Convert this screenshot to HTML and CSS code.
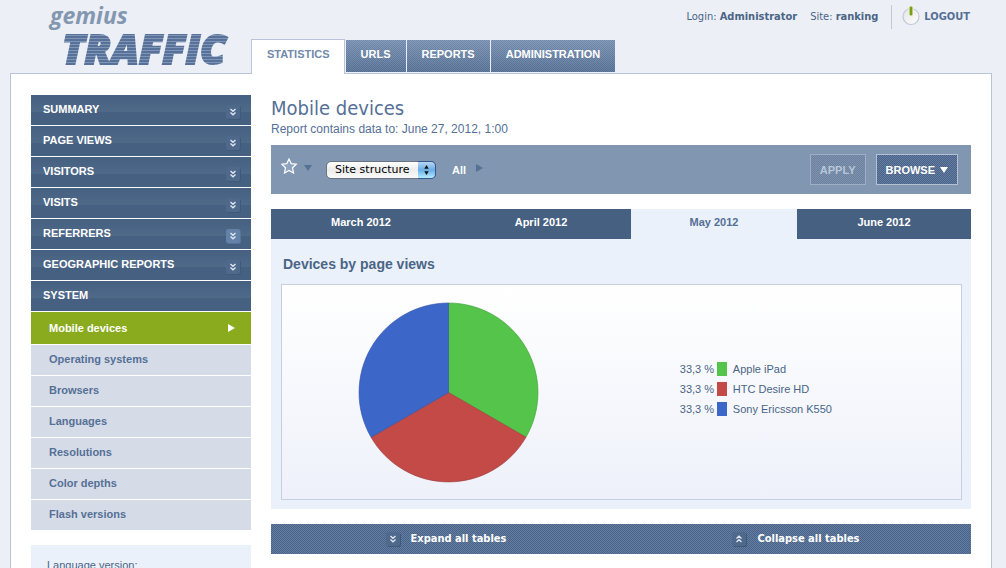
FILE: index.html
```html
<!DOCTYPE html>
<html lang="en">
<head>
<meta charset="utf-8">
<title>gemius TRAFFIC - Mobile devices</title>
<link rel="stylesheet" href="styles.css">
</head>
<body>
<svg class="symbols" aria-hidden="true">
  <symbol id="chevrons" viewBox="0 0 14 14"><path d="M4.5 4 L7 6.2 L9.500 4 M4.500 7.500 L7 9.700 L9.500 7.500" fill="none" stroke="#dfe7f2" stroke-width="1.4"/></symbol>
</svg>
<header class="header">
  <a class="logo" href="#"><span class="logo-top">gemius</span><span class="logo-main">TRAFFIC</span></a>
  <nav class="tabs">
    <a class="tab tab-active" href="#">STATISTICS</a>
    <a class="tab" href="#">URLS</a>
    <a class="tab" href="#">REPORTS</a>
    <a class="tab" href="#">ADMINISTRATION</a>
  </nav>
  <div class="account">
    <span>Login: <b>Administrator</b></span>
    <span>Site: <b>ranking</b></span>
    <a class="logout" href="#">
      <svg width="18" height="22" viewBox="0 0 18 22" aria-hidden="true">
        <defs><linearGradient id="knob" x1="0" y1="0" x2="1" y2="1"><stop offset="0" stop-color="#e4e4e4"/><stop offset="1" stop-color="#fff"/></linearGradient></defs>
        <circle cx="9" cy="10.500" r="8" fill="url(#knob)" stroke="#c0c8da" stroke-width="1.200"/>
        <rect x="6.500" y="0" width="5" height="10" fill="#eceff5"/>
        <rect x="7.500" y="0.500" width="3" height="9" rx="1" fill="#8cb010"/>
        <path d="M9 1V9" stroke="#6d8d0c"/>
      </svg>LOGOUT</a>
  </div>
</header>
<div class="page">
  <aside class="sidebar">
    <nav class="menu">
      <a class="menu-item" href="#">SUMMARY<svg class="toggle"><use href="#chevrons"/></svg></a>
      <a class="menu-item" href="#">PAGE VIEWS<svg class="toggle"><use href="#chevrons"/></svg></a>
      <a class="menu-item" href="#">VISITORS<svg class="toggle"><use href="#chevrons"/></svg></a>
      <a class="menu-item" href="#">VISITS<svg class="toggle"><use href="#chevrons"/></svg></a>
      <a class="menu-item" href="#">REFERRERS<svg class="toggle toggle-hot"><use href="#chevrons"/></svg></a>
      <a class="menu-item" href="#">GEOGRAPHIC REPORTS<svg class="toggle"><use href="#chevrons"/></svg></a>
      <a class="menu-item" href="#">SYSTEM</a>
      <a class="sub-item sub-active" href="#">Mobile devices<svg width="7" height="8" viewBox="0 0 7 8" aria-hidden="true"><path d="M0 0L7 4L0 8Z" fill="#fff"/></svg></a>
      <a class="sub-item" href="#">Operating systems</a>
      <a class="sub-item" href="#">Browsers</a>
      <a class="sub-item" href="#">Languages</a>
      <a class="sub-item" href="#">Resolutions</a>
      <a class="sub-item" href="#">Color depths</a>
      <a class="sub-item" href="#">Flash versions</a>
    </nav>
    <div class="language">Language version:</div>
  </aside>
  <main class="content">
    <h1 class="title">Mobile devices</h1>
    <p class="subtitle">Report contains data to: June 27, 2012, 1:00</p>
    <div class="toolbar">
      <button class="favourite" type="button" aria-label="Favourites">
        <svg width="32" height="16" viewBox="0 0 32 16" aria-hidden="true">
          <path d="M8 1L10.200 5.600L15.300 6.200L11.500 9.700L12.500 15L8 12.500L3.500 15L4.500 9.700L0.700 6.200L5.800 5.600Z" fill="#8da3c0" stroke="#fff" stroke-width="1.200"/>
          <path d="M23 7H31L27 13Z" fill="#557196"/>
        </svg>
      </button>
      <span class="structure">
        <select class="structure-select" aria-label="Filter"><option>Site structure</option></select>
        <svg class="structure-arrows" viewBox="0 0 18 18" aria-hidden="true"><path d="M9 3.500L11.500 7.500H6.500Z M9 14.500L6.500 10.500H11.500Z" fill="#111"/></svg>
      </span>
      <a class="all" href="#">All<svg width="7" height="12" viewBox="0 0 7 12" aria-hidden="true"><path d="M0 0L7 4L0 8Z" fill="#557196"/></svg></a>
      <button class="button button-off" type="button" disabled>APPLY</button>
      <button class="button" type="button">BROWSE<svg width="8" height="7" viewBox="0 0 8 7" aria-hidden="true"><path d="M0 0H8L4 6Z" fill="#fff"/></svg></button>
    </div>
    <section class="report">
      <nav class="months">
        <a class="month" href="#">March 2012</a>
        <a class="month" href="#">April 2012</a>
        <a class="month month-active" href="#">May 2012</a>
        <a class="month" href="#">June 2012</a>
      </nav>
      <h2 class="chart-title">Devices by page views</h2>
      <div class="chart">
        <svg class="pie" viewBox="-91 -91 182 182" role="img" aria-label="Devices by page views">
          <path d="M0 0V-90A90 90 0 0 1 77.900 45Z" fill="#54c44a" stroke="#3d9c36" stroke-width="0.600"/>
          <path d="M0 0L77.900 45A90 90 0 0 1 -77.900 45Z" fill="#c44a48" stroke="#9c3a38" stroke-width="0.600"/>
          <path d="M0 0L-77.900 45A90 90 0 0 1 0 -90Z" fill="#3c66c8" stroke="#3050a0" stroke-width="0.600"/>
        </svg>
        <ul class="legend">
          <li><span>33,3 %</span><i class="swatch green"></i>Apple iPad</li>
          <li><span>33,3 %</span><i class="swatch red"></i>HTC Desire HD</li>
          <li><span>33,3 %</span><i class="swatch blue"></i>Sony Ericsson K550</li>
        </ul>
      </div>
    </section>
    <div class="tables-bar">
      <button class="bar-button" type="button"><svg class="toggle"><use href="#chevrons"/></svg>Expand all tables</button>
      <button class="bar-button" type="button"><svg class="toggle toggle-up"><use href="#chevrons"/></svg>Collapse all tables</button>
    </div>
  </main>
</div>
</body>
</html>
```

FILE: styles.css
```css
* { box-sizing: border-box; }

body {
  margin: 0;
  min-height: 100vh;
  display: flex;
  flex-direction: column;
  background: #eceff5;
  color: #4a6586;
  font: 11px/14px "Liberation Sans", Arial, sans-serif;
}

a { color: inherit; text-decoration: none; }
button { font: inherit; cursor: pointer; }
.symbols { display: none; }

/* Header */
.header {
  display: flex;
  height: 73px;
  padding: 0 36px 0 50px;
}
.logo {
  width: 201px;
  display: flex;
  flex-direction: column;
  font-family: "Open Sans", "Noto Sans", sans-serif;
  font-style: italic;
  font-weight: 800;
}
.logo-top {
  font-size: 23px;
  line-height: 30px;
  font-weight: 700;
  color: #8497b1;
}
.logo-main {
  padding-left: 12px;
  font-size: 41px;
  line-height: 36px;
  color: transparent;
  -webkit-text-stroke: 2px transparent;
  background: repeating-linear-gradient(#57719a 0 2px, #8096b5 2px 3px);
  background-clip: text;
  -webkit-background-clip: text;
}
.tabs {
  display: flex;
  gap: 1px;
  align-items: flex-end;
  align-self: flex-end;
}
.tab {
  height: 32px;
  margin-bottom: 1px;
  padding: 7px 15px;
  color: #fff;
  font-weight: bold;
  background:
    repeating-conic-gradient(#5e779c55 0 25%, #9aacc655 0 50%) 0 0 / 2px 2px,
    linear-gradient(#7e95b4, #4d688c);
}
.tab-active {
  position: relative;
  height: 35px;
  margin-bottom: -1px;
  padding: 7px 14px 7px 15px;
  background: #fff;
  border: 1px solid #b9c4d9;
  border-bottom: 0;
  color: #7289ab;
}
.account {
  display: flex;
  gap: 13px;
  height: 34px;
  margin-left: auto;
  align-items: center;
  font-family: "DejaVu Sans Condensed", "DejaVu Sans", sans-serif;
  font-stretch: condensed;
}
.logout {
  display: flex;
  align-items: center;
  gap: 4px;
  height: 24px;
  padding-left: 10px;
  border-left: 1px solid #c3c9d4;
  color: #557096;
  font-weight: bold;
}

/* Page frame */
.page {
  flex: 1;
  display: flex;
  gap: 20px;
  margin: 0 14px 0 10px;
  padding: 21px 20px 0;
  background: #fff;
  border: 1px solid #b9c4d9;
  border-bottom: 0;
}

/* Sidebar */
.sidebar {
  width: 220px;
  flex: none;
  display: flex;
  flex-direction: column;
  gap: 15px;
}
.menu {
  display: flex;
  flex-direction: column;
  gap: 1px;
  font-weight: bold;
}
.menu-item {
  display: flex;
  justify-content: space-between;
  height: 30px;
  padding: 7px 11px 0 12px;
  color: #fff;
  background: linear-gradient(#466081, #4f6989 17px, #466081 17px);
}
.toggle {
  width: 14px;
  height: 14px;
  border-radius: 2px;
  background: #4f698c;
  box-shadow: 1px 1px 0 #3f5979;
}
.menu-item .toggle { margin-top: 3px; }
.toggle-hot { background: #6482a8; box-shadow: 1px 1px 0 #587398; }
.toggle-up { transform: rotate(180deg); box-shadow: -1px -1px 0 #3f5979; }
.sub-item {
  height: 30px;
  padding: 7px 18px;
  color: #557096;
  background: #d5dce8;
}
.sub-active {
  display: flex;
  justify-content: space-between;
  align-items: center;
  height: 32px;
  padding: 0 16px 0 18px;
  background: #8aab1e;
  color: #fff;
}
.language {
  flex: 1;
  padding: 13px 16px 0;
  background: #eaf1fa;
}

/* Content */
.content { flex: 1; min-width: 0; }
.title {
  margin: 0;
  color: #557096;
  font: 20px/26px "DejaVu Sans Condensed", "DejaVu Sans", sans-serif;
  font-stretch: condensed;
}
.subtitle {
  margin: 0 0 8px;
  font-size: 12px;
  line-height: 16px;
  color: #557096;
}
.toolbar {
  display: flex;
  align-items: center;
  height: 49px;
  margin-bottom: 15px;
  padding: 0 13px 0 10px;
  background: #8096b1;
  color: #fff;
  font-weight: bold;
}
.favourite {
  height: 24px;
  margin-right: 13px;
  padding: 0 0 4px;
  border: 0;
  background: none;
}
.structure { position: relative; display: flex; }
.structure-select {
  appearance: none;
  width: 110px;
  height: 18px;
  padding: 0 24px 0 8px;
  border: 1px solid #6a7480;
  border-radius: 5px;
  background: linear-gradient(#fff, #ececec 50%, #fafafa);
  color: #000;
  font: 11px/14px "DejaVu Sans", Verdana, sans-serif;
}
.structure-arrows {
  position: absolute;
  right: 0;
  top: 0;
  width: 18px;
  height: 18px;
  border: 1px solid #35558f;
  border-left: 0;
  border-radius: 0 5px 5px 0;
  background: linear-gradient(#b9d6f3, #68aee6 50%, #b5ecff);
}
.all {
  display: flex;
  align-items: center;
  gap: 10px;
  margin: 0 auto 0 16px;
}
.button {
  height: 31px;
  padding: 0 9px;
  margin-left: 10px;
  border: 1px solid #b3c1d3;
  color: #fff;
  font-weight: bold;
  background: repeating-conic-gradient(#486387 0 25%, #647da0 0 50%) 0 0 / 2px 2px;
}
.button svg { margin-left: 5px; }
.button-off {
  border-color: #9dafc5;
  color: #b8c6d8;
  background: repeating-conic-gradient(#6c829f 0 25%, #7d92ae 0 50%) 0 0 / 2px 2px;
}

/* Report */
.report {
  margin-bottom: 15px;
  padding-bottom: 9px;
  background: #eaf1fa;
}
.months {
  display: grid;
  grid-template-columns: 180fr 180fr 166fr 174fr;
  text-align: center;
  font-weight: bold;
}
.month {
  height: 30px;
  padding-top: 6px;
  background: #466081;
  color: #fff;
}
.month-active { background: none; color: #557096; }
.chart-title {
  margin: 0;
  padding: 16px 12px 11px;
  font-size: 14px;
  line-height: 18px;
}
.chart {
  display: grid;
  grid-template-columns: 399fr 282fr;
  align-items: center;
  height: 216px;
  margin: 0 9px 0 10px;
  border: 1px solid #c6d0e0;
  background: linear-gradient(#fff, #eef1fa);
}
.pie {
  width: 181px;
  height: 181px;
  margin-left: 76px;
}
.legend {
  margin: 0;
  padding: 0 0 6px;
  list-style: none;
}
.legend li {
  display: flex;
  align-items: center;
  height: 20px;
}
.legend span { width: 37px; }
.swatch {
  width: 10px;
  height: 14px;
  margin-right: 6px;
}
.green { background: #54c44a; }
.red { background: #c44a48; }
.blue { background: #3c66c8; }

.tables-bar {
  display: grid;
  grid-template-columns: 1fr 1fr;
  height: 30px;
  background: repeating-conic-gradient(#486387 0 25%, #647da0 0 50%) 0 0 / 2px 2px;
}
.bar-button {
  display: flex;
  justify-content: center;
  align-items: center;
  gap: 11px;
  border: 0;
  background: none;
  color: #fff;
  font: bold 11px/14px "DejaVu Sans Condensed", "DejaVu Sans", sans-serif;
  font-stretch: condensed;
}
```
